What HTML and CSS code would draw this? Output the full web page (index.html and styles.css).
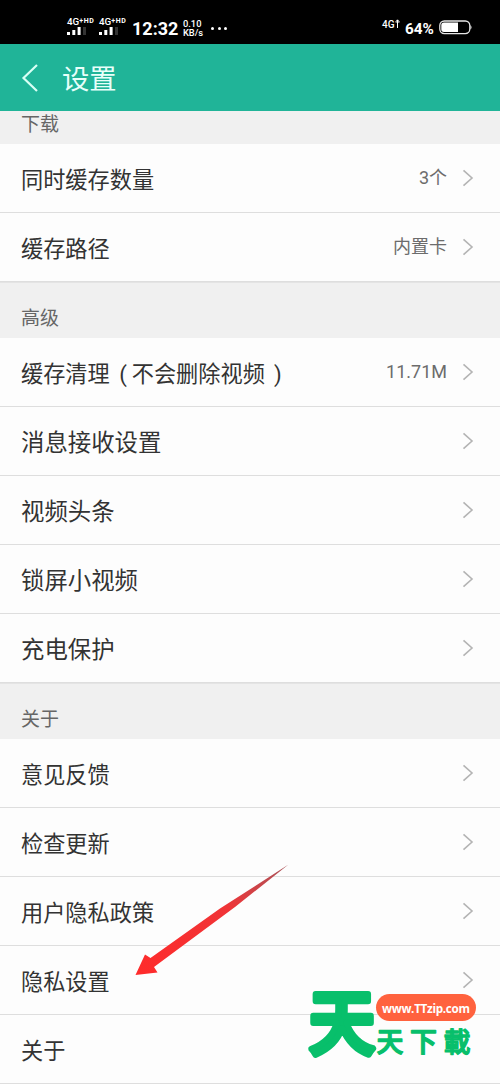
FILE: index.html
```html
<!DOCTYPE html>
<html lang="zh-CN">
<head>
<meta charset="utf-8">
<title>设置</title>
<link rel="stylesheet" href="styles.css">
</head>
<body>
<svg class="defs" width="0" height="0"><symbol id="chev" viewBox="0 0 12 18"><path d="M1.500 1.300 10 9 1.500 16.700" fill="none" stroke="#b4b4b4" stroke-width="1.600"/></symbol>
<symbol id="bars" viewBox="0 0 20 8"><path d="M0 5h3v3H0zM5.300 3h3v5h-3zM10.600 0h3v8h-3z" fill="#fff"/><path d="M16 0h3v8h-3z" fill="#333"/></symbol></svg>
<div class="status">
  <div class="sim"><span>4G<sup>+HD</sup></span><svg width="20" height="8"><use href="#bars"/></svg></div>
  <div class="sim"><span>4G<sup>+HD</sup></span><svg width="20" height="8"><use href="#bars"/></svg></div>
  <span class="time">12:32</span>
  <span class="speed">0.10<br>KB/s</span>
  <span class="dots"><i></i><i></i><i></i></span>
  <span class="net">4G<svg width="5" height="9" viewBox="0 0 5 9"><path d="M2.500 9V1M.5 3h4M1 2.500 2.500.8 4 2.500" fill="none" stroke="#fff" stroke-width="1"/></svg></span>
  <span class="pct">64%</span>
  <svg class="battery" width="34" height="15" viewBox="0 0 34 15"><rect x=".8" y="1" width="30" height="12.600" rx="4.500" fill="none" stroke="#e6e6e6" stroke-width="1.300"/><path d="M5 2.600h14v9.400H5a2.700 2.700 0 0 1-2.700-2.700v-4A2.700 2.700 0 0 1 5 2.600z" fill="#fff"/><path d="M31.500 5q2 2.300 0 4.600z" fill="#fff"/></svg>
</div>
<header class="header">
  <svg width="18" height="30" viewBox="0 0 18 30"><path d="M16 2 2.500 15 16 28" fill="none" stroke="#d9fff5" stroke-width="2.200"/></svg>
  <h1>设置</h1>
</header>
<main>
  <h2 class="section first">下载</h2>
  <div class="row"><span>同时缓存数量</span><em>3个</em><svg><use href="#chev"/></svg></div>
  <div class="row"><span>缓存路径</span><em>内置卡</em><svg><use href="#chev"/></svg></div>
  <h2 class="section">高级</h2>
  <div class="row"><span>缓存清理<b class="open">(</b>不会删除视频<b class="close">)</b></span><em>11.71M</em><svg><use href="#chev"/></svg></div>
  <div class="row wide"><span>消息接收设置</span><svg><use href="#chev"/></svg></div>
  <div class="row wide"><span>视频头条</span><svg><use href="#chev"/></svg></div>
  <div class="row wide"><span>锁屏小视频</span><svg><use href="#chev"/></svg></div>
  <div class="row wide"><span>充电保护</span><svg><use href="#chev"/></svg></div>
  <h2 class="section">关于</h2>
  <div class="row"><span>意见反馈</span><svg><use href="#chev"/></svg></div>
  <div class="row"><span>检查更新</span><svg><use href="#chev"/></svg></div>
  <div class="row"><span>用户隐私政策</span><svg><use href="#chev"/></svg></div>
  <div class="row"><span>隐私设置</span><svg><use href="#chev"/></svg></div>
  <div class="row"><span>关于</span></div>
</main>
<svg class="arrow" width="156" height="114" viewBox="0 0 156 114">
  <defs><linearGradient id="red" x1="0" y1="1" x2="1" y2="0"><stop offset="0" stop-color="#ff2b2b"/><stop offset=".6" stop-color="#f03437"/><stop offset="1" stop-color="#a8545a"/></linearGradient></defs>
  <path d="M154.500 1.500 86 45.500 16.500 95 11 91.500 1.500 112 23.500 109.500 20 104 101 44z" fill="url(#red)"/>
</svg>
<svg class="logo" width="180" height="118" viewBox="0 -20 180 118">
  <text class="big" transform="translate(3 63) scale(1 1.060)">天</text>
  <text class="small" x="70.500" y="65.500">天下載</text>
  <rect x="70" y="8" width="100" height="27" rx="13.500" fill="#ff623e"/>
  <text class="url" x="120" y="26.500" textLength="88">www.TTzip.com</text>
</svg>
</body>
</html>
```
FILE: styles.css
```css
* { box-sizing: border-box; }
body { margin: 0; width: 500px; height: 1084px; overflow: hidden; position: relative; background: #fdfdfd; font-family: Roboto, "Noto Sans CJK SC", sans-serif; color: #333; }
.defs { position: absolute; }
.status { height: 44px; background: #000; color: #fff; display: flex; align-items: flex-start; padding-left: 67px; }
.sim { width: 32px; padding-top: 17px; font-size: 9.8px; line-height: 10px; font-weight: 500; white-space: nowrap; }
.sim span, .sim svg { display: block; }
.sim sup { font-size: 7px; line-height: 0; vertical-align: 2px; font-weight: 700; letter-spacing: .6px; }
.sim span { height: 10px; }
.time { width: 52px; padding-top: 18px; font-size: 18px; line-height: 21px; font-weight: 700; margin-left: 1px; }
.speed { width: 28px; padding-top: 19px; font-size: 9.300px; line-height: 9px; font-weight: 500; margin-left: -1px; }
.dots { display: flex; gap: 3.500px; padding-top: 27px; }
.dots i { width: 3px; height: 3px; border-radius: 50%; background: #fff; }
.net { margin-left: auto; padding-top: 19px; font-size: 10px; line-height: 11px; font-weight: 500; width: 23px; white-space: nowrap; }
.pct { width: 34px; padding-top: 19px; font-size: 15.300px; line-height: 20px; font-weight: 700; }
.battery { margin: 20px 27px 0 0; }
.header { height: 67px; background: #20b498; display: flex; align-items: center; padding-left: 21px; }
.header h1 { margin: 0 0 0 23px; padding-top: 4px; font-size: 27.300px; line-height: 36px; font-weight: 400; color: #e8fffa; }
.section { margin: 0; height: 56px; padding: 15px 21px 0; background: #f0f0f0; font-size: 19px; line-height: 42px; font-weight: 400; color: #666; border-top: 1px solid #e4e4e4; }
.section.first { height: 33px; padding-top: 0; line-height: 28px; border: 0; }
.row { height: 69px; display: flex; align-items: center; padding: 0 26px 1px 21px; border-bottom: 1px solid #dedede; font-size: 22.200px; line-height: 34px; }
.row > span { margin-right: auto; padding-top: 5px; white-space: nowrap; }
.row b { font-weight: 400; display: inline-block; width: 22px; }
.row .open { text-align: right; padding-right: 5px; }
.row .close { padding-left: 9px; }
.row.wide { font-size: 23.400px; }
.row em { font-style: normal; font-size: 18px; color: #6c6c6c; margin-right: 15px; }
.row svg { width: 12px; height: 18px; }
.arrow { position: absolute; left: 134px; top: 863px; }
.logo { position: absolute; left: 306px; top: 966px; }
.logo text { font-family: "Noto Sans CJK TC", sans-serif; fill: #08bf6b; stroke: #08bf6b; stroke-linejoin: round; }
.logo .big { font-size: 66px; font-weight: 500; stroke-width: 6px; }
.logo .small { font-size: 27px; font-weight: 500; letter-spacing: 6.500px; stroke-width: 1.300px; }
.logo .url { font-family: "Open Sans", sans-serif; font-size: 11.700px; font-weight: 700; text-anchor: middle; fill: #fff; stroke: none; }
```
